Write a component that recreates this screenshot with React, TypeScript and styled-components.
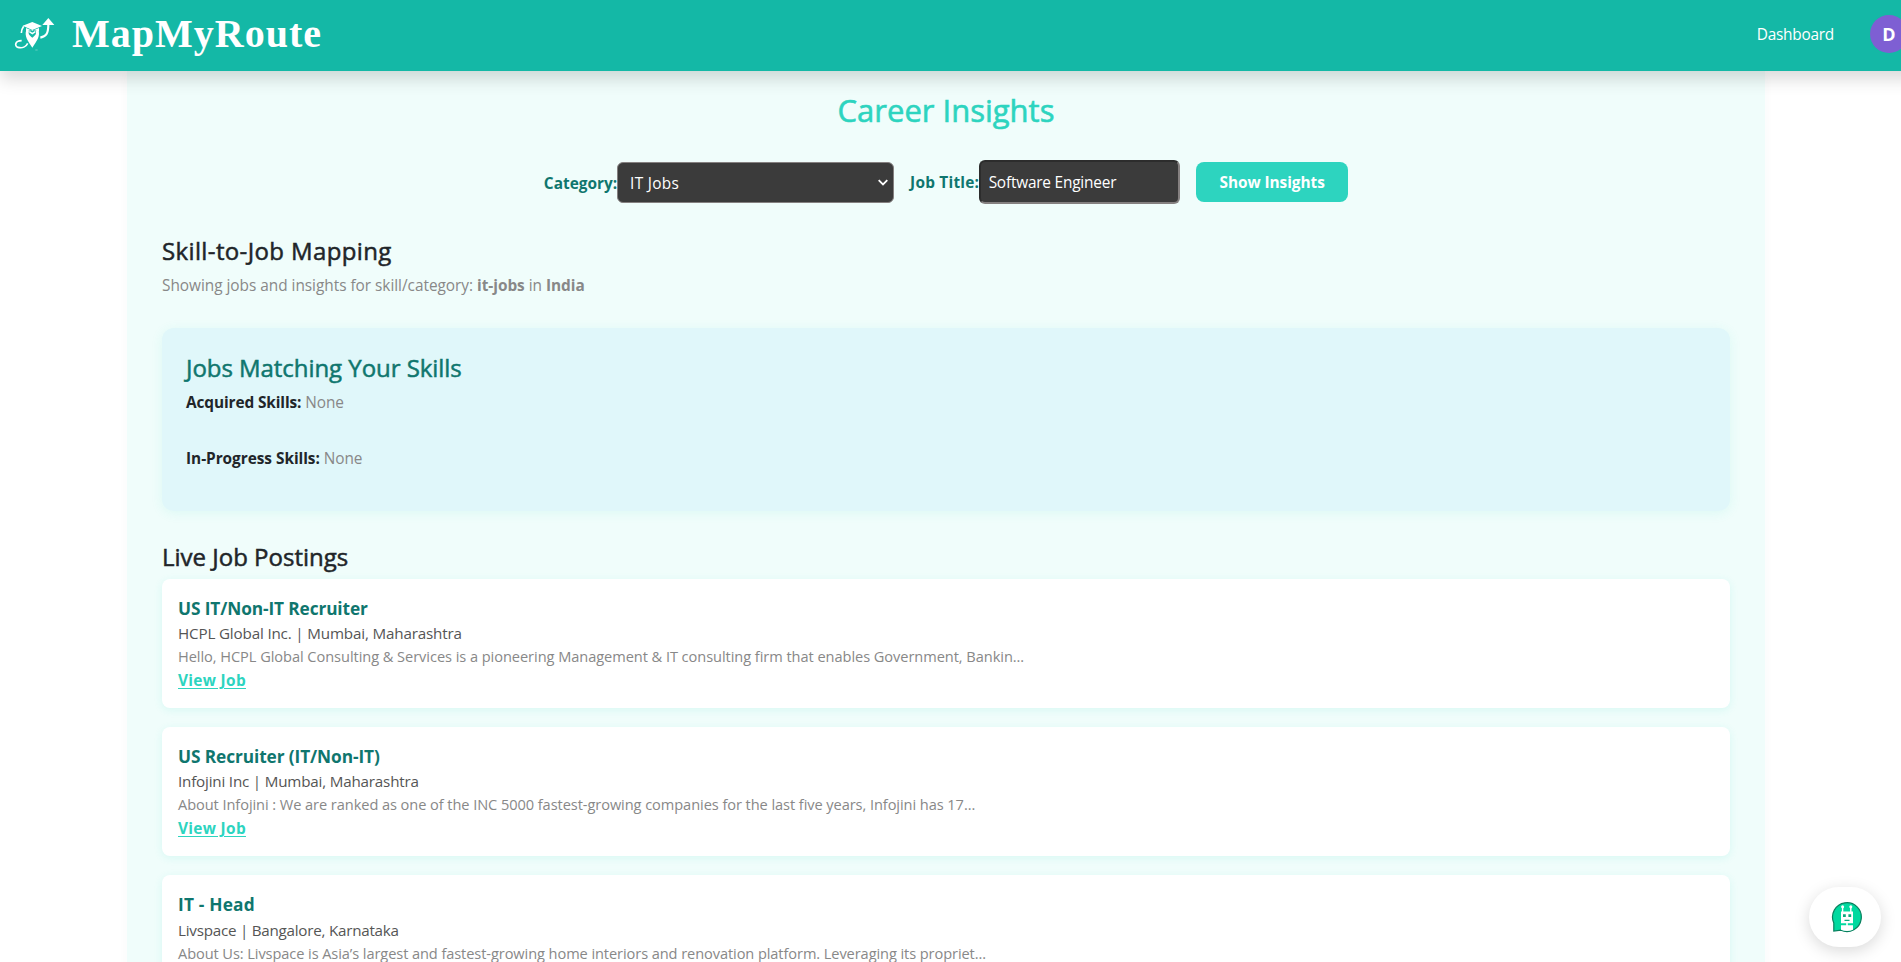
import React from "react";
import styled, { createGlobalStyle } from "styled-components";

const GlobalStyle = createGlobalStyle`
  *, *::before, *::after { box-sizing: border-box; }
  body {
    margin: 0;
    background: #fff;
    color: #212529;
    font-family: "Open Sans", "Noto Sans", sans-serif;
    font-size: 15.4px;
    line-height: 24px;
  }
  h1, h2, h3, p { margin: 0; }
`;

const Page = styled.div`
  height: 100vh;
  overflow: hidden;
`;

const Header = styled.header`
  position: relative;
  z-index: 2;
  display: flex;
  align-items: center;
  width: calc(100% + 19px);
  height: 71px;
  padding: 0 12px 3px 14px;
  background: #14b8a6;
  box-shadow: 0 8px 16px rgba(0, 0, 0, 0.15);
`;

const LogoMark = styled.svg`
  width: 42px;
  height: 35px;
  flex: none;
`;

const Brand = styled.span`
  margin: 0 auto 0 16px;
  color: #fff;
  font: 700 40px/48px "Liberation Serif", serif;
  letter-spacing: 1px;
`;

const NavLink = styled.a`
  margin-right: 36px;
  padding-top: 2px;
  color: #fff;
  font-size: 15.4px;
  letter-spacing: -0.25px;
`;

const Avatar = styled.div`
  display: flex;
  align-items: center;
  justify-content: center;
  width: 38px;
  height: 38px;
  border-radius: 50%;
  background: #7e5fd3;
  color: #fff;
  font-size: 18px;
  font-weight: 700;
`;

const Container = styled.main`
  width: 1638px;
  margin-left: 127px;
  padding: 20px 35px 40px;
  background: #f0fdfb;
  box-shadow: 0 2px 10px rgba(20, 80, 80, 0.03);
`;

const PageTitle = styled.h1`
  color: #2dd4bf;
  font-size: 31px;
  font-weight: 500;
  line-height: 38px;
  text-align: center;
  -webkit-text-stroke: 0.6px currentColor;
`;

const Controls = styled.form`
  display: flex;
  align-items: center;
  justify-content: center;
  gap: 16px;
  height: 44px;
  margin: 31px 0 32px;
`;

const Field = styled.label<{ $drop: number; $track?: number }>`
  display: flex;
  align-items: center;
  color: #0f766e;
  font-weight: 700;

  > span {
    padding-top: ${(p) => p.$drop}px;
    letter-spacing: ${(p) => p.$track ?? 0}px;
  }
`;

const SelectBox = styled.div`
  display: flex;
  align-items: center;
  justify-content: space-between;
  width: 277px;
  height: 41px;
  padding: 1px 4px 0 12px;
  border: 1px solid #858080;
  border-radius: 6px;
  background: #3b3b3b;
  color: #fff;
  font-weight: 400;
  letter-spacing: 0.3px;

  > span { padding-top: 2px; }
`;

const TitleInput = styled.input`
  width: 201px;
  height: 44px;
  padding: 1px 7.5px 0;
  border: 2px solid;
  border-color: #2c2c2c #858080 #858080 #2c2c2c;
  border-radius: 6px;
  outline: none;
  background: #3b3b3b;
  color: #fff;
  font: 400 15.4px/24px "Open Sans", sans-serif;
  letter-spacing: -0.2px;
`;

const ShowButton = styled.button`
  width: 152px;
  height: 40px;
  padding: 2px 0 0;
  border: 0;
  border-radius: 8px;
  background: #2dd4bf;
  color: #fff;
  font: 700 15.4px/24px "Open Sans", sans-serif;
  letter-spacing: -0.05px;
`;

const Heading = styled.h2<{ $track: number; $teal?: boolean }>`
  margin-bottom: 8px;
  color: ${(p) => (p.$teal ? "#0f766e" : "inherit")};
  font-size: 24px;
  font-weight: 500;
  line-height: 29px;
  letter-spacing: ${(p) => p.$track}px;
  -webkit-text-stroke: 0.5px currentColor;
`;

const Summary = styled.p`
  padding-top: 2px;
  color: #888;
  line-height: 22px;
  letter-spacing: -0.03px;
`;

const SkillsPanel = styled.section`
  height: 182.6px;
  margin: 31px 0;
  padding: 25px 24px 0;
  border-radius: 12px;
  background: #e0f7fa;
  box-shadow: 0 2px 12px rgba(45, 212, 191, 0.1);
`;

const SkillRow = styled.div<{ $track: number }>`
  margin-bottom: 32px;
  padding-top: 2px;
  line-height: 22px;

  b { letter-spacing: ${(p) => p.$track}px; }
  span { color: #888; letter-spacing: -0.1px; }
`;

const JobCard = styled.article`
  margin-bottom: 19.2px;
  padding: 16px;
  border-radius: 8px;
  background: #fff;
  box-shadow: 0 2px 8px rgba(45, 212, 191, 0.12);
`;

const JobTitle = styled.h3<{ $track: number }>`
  padding-top: 2px;
  color: #0f766e;
  font-size: 17.3px;
  font-weight: 700;
  line-height: 24.4px;
  letter-spacing: ${(p) => p.$track}px;
`;

const Company = styled.p<{ $track: number }>`
  color: #555;
  font-size: 15.2px;
  letter-spacing: ${(p) => p.$track}px;
`;

const Description = styled.p<{ $track: number }>`
  color: #888;
  font-size: 14.6px;
  line-height: 22.8px;
  letter-spacing: ${(p) => p.$track}px;
`;

const JobLink = styled.a`
  display: block;
  width: max-content;
  padding-top: 2px;
  color: #2dd4bf;
  font-weight: 700;
  line-height: 22px;
  letter-spacing: 0.33px;
  text-decoration: underline;
  text-decoration-thickness: 1px;
  text-underline-offset: 1.5px;
`;

const ChatButton = styled.button`
  position: fixed;
  right: 20px;
  bottom: 15px;
  display: flex;
  align-items: center;
  justify-content: center;
  width: 72px;
  height: 60px;
  padding: 0 0 0 4px;
  border: 0;
  border-radius: 30px;
  background: #fff;
  box-shadow: 0 4px 16px rgba(0, 0, 0, 0.15);
`;

const jobs = [
  {
    title: "US IT/Non-IT Recruiter",
    company: "HCPL Global Inc. | Mumbai, Maharashtra",
    text: "Hello, HCPL Global Consulting & Services is a pioneering Management & IT consulting firm that enables Government, Bankin...",
    track: [-0.12, -0.16, -0.056],
  },
  {
    title: "US Recruiter (IT/Non-IT)",
    company: "Infojini Inc | Mumbai, Maharashtra",
    text: "About Infojini : We are ranked as one of the INC 5000 fastest-growing companies for the last five years, Infojini has 17...",
    track: [-0.1, -0.19, -0.07],
  },
  {
    title: "IT - Head",
    company: "Livspace | Bangalore, Karnataka",
    text: "About Us: Livspace is Asia’s largest and fastest-growing home interiors and renovation platform. Leveraging its propriet...",
    track: [0.2, -0.24, -0.085],
  },
];

const RouteLogo = () => (
  <LogoMark viewBox="42 50 126 105" fill="none">
    <path d="M68 76 97 65 126 77 97 89Z" fill="#fff" />
    <path d="M78 83v11q19-10 39 0v-11l-20 8Z" fill="#fff" />
    <path d="M71 78q-6 8-7 20" stroke="#fff" strokeWidth="5" />
    <path
      d="M79 90C72 106 84 124 97 142 110 124 122 106 115 90L107 93C110 98 108 105 97 112 86 105 84 98 87 93Z"
      fill="#fff"
    />
    <path d="m88 94 9 6 9-6" stroke="#fff" strokeWidth="4" />
    <path d="M121 112C140 108 145 98 145 70" stroke="#fff" strokeWidth="6.5" />
    <path d="M127 74 145 53 163 74Z" fill="#fff" />
    <path d="M65 121C44 121 43 138 54 141 67 145 78 139 83 129" stroke="#fff" strokeWidth="5" />
    <path d="M106 149h7" stroke="#8fdcd3" strokeWidth="2" />
  </LogoMark>
);

const BotIcon = () => (
  <svg width="32" height="32" viewBox="0 0 32 32">
    <path
      d="M2.8 30V22A14.4 14.4 0 1 1 10 29.2L2.8 30Z"
      fill="#00d99f"
      stroke="#08805e"
      strokeWidth="1.2"
    />
    <path d="M11.6 5.5v6M19.8 5.5v6" stroke="#fff" strokeWidth="1.4" />
    <circle cx="11.6" cy="5.7" r="1.5" fill="#fff" />
    <circle cx="19.8" cy="5.7" r="1.5" fill="#fff" />
    <path d="M10 10.5h12v11.7H10zM10 24.3h12v4.4q-6 2.4-12 0zM15.2 22h1.6v3h-1.6z" fill="#fff" />
    <path d="M12 13.3h2.8v2.8H12zM17.4 13.3h2.8v2.8h-2.8zM13.5 18.8h5v1.2h-5z" fill="#0aa97c" />
  </svg>
);

export default function App() {
  return (
    <Page>
      <GlobalStyle />
      <Header>
        <RouteLogo />
        <Brand>MapMyRoute</Brand>
        <NavLink>Dashboard</NavLink>
        <Avatar>D</Avatar>
      </Header>
      <Container>
        <PageTitle>Career Insights</PageTitle>
        <Controls>
          <Field $drop={3}>
            <span>Category:</span>
            <SelectBox>
              <span>IT Jobs</span>
              <svg width="12" height="12" viewBox="0 0 12 12" fill="none">
                <path d="m1.7 3.2 4.3 4.3 4.3-4.3" stroke="#fff" strokeWidth="1.8" />
              </svg>
            </SelectBox>
          </Field>
          <Field $drop={2} $track={0.22}>
            <span>Job Title:</span>
            <TitleInput defaultValue="Software Engineer" />
          </Field>
          <ShowButton type="button">Show Insights</ShowButton>
        </Controls>
        <Heading $track={0.37}>Skill-to-Job Mapping</Heading>
        <Summary>
          Showing jobs and insights for skill/category: <b>it-jobs</b> in <b>India</b>
        </Summary>
        <SkillsPanel>
          <Heading $track={-0.05} $teal>Jobs Matching Your Skills</Heading>
          <SkillRow $track={-0.11}>
            <b>Acquired Skills:</b> <span>None</span>
          </SkillRow>
          <SkillRow $track={-0.04}>
            <b>In-Progress Skills:</b> <span>None</span>
          </SkillRow>
        </SkillsPanel>
        <Heading $track={0}>Live Job Postings</Heading>
        {jobs.map((job) => (
          <JobCard key={job.title}>
            <JobTitle $track={job.track[0]}>{job.title}</JobTitle>
            <Company $track={job.track[1]}>{job.company}</Company>
            <Description $track={job.track[2]}>{job.text}</Description>
            <JobLink>View Job</JobLink>
          </JobCard>
        ))}
      </Container>
      <ChatButton aria-label="Chat">
        <BotIcon />
      </ChatButton>
    </Page>
  );
}
